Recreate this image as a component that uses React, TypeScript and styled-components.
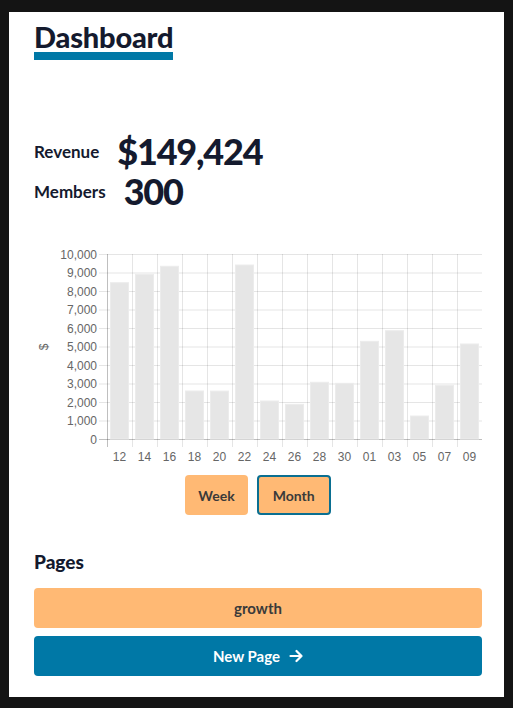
import React from "react";
import styled, { createGlobalStyle } from "styled-components";

const GlobalStyle = createGlobalStyle`
  html, body { margin: 0; padding: 0; }
  body {
    background: #141414;
    font-family: Lato, "Noto Sans", sans-serif;
    padding: 12px 9px 11px;
  }
`;

const Card = styled.main`
  background: #ffffff;
  padding: 10px 22px 21px 25px;
  display: flex;
  flex-direction: column;
`;

const Title = styled.h1`
  margin: 0;
  align-self: flex-start;
  font-size: 29px;
  line-height: 30px;
  font-weight: 900;
  color: #141a2e;
  letter-spacing: -0.2px;
  border-bottom: 8px solid #0078a6;
`;

const Stats = styled.section`
  margin-top: 71px;
  display: flex;
  flex-direction: column;
`;

const StatRow = styled.div`
  display: flex;
  align-items: center;
  gap: 18px;
  height: 40px;
`;

const StatLabel = styled.span`
  font-size: 17px;
  font-weight: 700;
  color: #141a2e;
`;

const StatValue = styled.span`
  font-size: 36px;
  font-weight: 900;
  color: #141a2e;
  letter-spacing: -1.2px;
`;

const ChartWrap = styled.div`
  margin-top: 29px;
  height: 228px;
`;

const ToggleRow = styled.div`
  display: flex;
  justify-content: center;
  gap: 9px;
  margin-top: 7px;
`;

const Toggle = styled.button<{ $active?: boolean }>`
  height: 40px;
  padding: 0 ${(p) => (p.$active ? "14px" : "13px")};
  background: #ffb974;
  border: ${(p) => (p.$active ? "2px solid #0a6f91" : "none")};
  border-radius: 4px;
  font-family: Lato, "Noto Sans", sans-serif;
  font-size: 14px;
  font-weight: 700;
  color: #3a3a3a;
`;

const PagesTitle = styled.h2`
  margin: 35px 0 0;
  font-size: 19px;
  line-height: 24px;
  font-weight: 900;
  color: #141a2e;
`;

const PageButton = styled.button<{ $primary?: boolean }>`
  margin-top: ${(p) => (p.$primary ? "8px" : "14px")};
  height: 40px;
  width: 100%;
  border: none;
  border-radius: 4px;
  background: ${(p) => (p.$primary ? "#0078a6" : "#ffb974")};
  color: ${(p) => (p.$primary ? "#ffffff" : "#3a3a3a")};
  font-family: Lato, "Noto Sans", sans-serif;
  font-size: 15px;
  font-weight: 700;
  display: flex;
  align-items: center;
  justify-content: center;
  gap: 9px;
`;

const labels = ["12", "14", "16", "18", "20", "22", "24", "26", "28", "30", "01", "03", "05", "07", "09"];
const values = [8450, 8900, 9335, 2595, 2590, 9405, 2054, 1875, 3065, 3010, 5280, 5855, 1243, 2900, 5135];

const Chart: React.FC = () => {
  const left = 73;
  const right = 448;
  const top = 14;
  const bottom = 199;
  const cat = (right - left) / labels.length;
  const yOf = (v: number) => bottom - ((bottom - top) * v) / 10000;
  const ticks = Array.from({ length: 11 }, (_, i) => i * 1000);
  return (
    <svg width="448" height="228" viewBox="0 0 448 228">
      {ticks.map((t) => (
        <g key={t}>
          <line
            x1={left - 8}
            x2={right}
            y1={yOf(t) + 0.5}
            y2={yOf(t) + 0.5}
            stroke={t === 0 ? "rgba(0,0,0,0.25)" : "rgba(0,0,0,0.1)"}
          />
          <text
            x={left - 10}
            y={yOf(t) + 4.5}
            textAnchor="end"
            fontFamily="'Liberation Sans', Arial, sans-serif"
            fontSize="12"
            fill="#666"
          >
            {t.toLocaleString("en-US")}
          </text>
        </g>
      ))}
      {Array.from({ length: labels.length + 1 }, (_, i) => (
        <line
          key={i}
          x1={left + i * cat + 0.5}
          x2={left + i * cat + 0.5}
          y1={top}
          y2={bottom + 8}
          stroke={i === 0 ? "rgba(0,0,0,0.25)" : "rgba(0,0,0,0.1)"}
        />
      ))}
      {values.map((v, i) => {
        const w = cat * 0.72;
        const x = left + i * cat + (cat - w) / 2;
        return (
          <rect
            key={i}
            x={x}
            y={yOf(v)}
            width={w}
            height={bottom - yOf(v)}
            fill="#e6e6e6"
            stroke="#ececec"
          />
        );
      })}
      {labels.map((l, i) => (
        <text
          key={l}
          x={left + i * cat + cat / 2}
          y={221}
          textAnchor="middle"
          fontFamily="'Liberation Sans', Arial, sans-serif"
          fontSize="12"
          fill="#666"
        >
          {l}
        </text>
      ))}
      <text
        x={0}
        y={0}
        transform="translate(14 107) rotate(-90)"
        textAnchor="middle"
        fontFamily="'Liberation Sans', Arial, sans-serif"
        fontSize="12"
        fill="#666"
      >
        $
      </text>
    </svg>
  );
};

const Arrow: React.FC = () => (
  <svg width="14" height="14" viewBox="0 0 14 14" fill="none" stroke="#fff" strokeWidth="2.2" strokeLinecap="round" strokeLinejoin="round">
    <path d="M1.5 7h11M7.5 2l5 5-5 5" />
  </svg>
);

export default function App() {
  return (
    <>
      <GlobalStyle />
      <Card>
        <Title>Dashboard</Title>
        <Stats>
          <StatRow>
            <StatLabel>Revenue</StatLabel>
            <StatValue>$149,424</StatValue>
          </StatRow>
          <StatRow>
            <StatLabel>Members</StatLabel>
            <StatValue>300</StatValue>
          </StatRow>
        </Stats>
        <ChartWrap>
          <Chart />
        </ChartWrap>
        <ToggleRow>
          <Toggle>Week</Toggle>
          <Toggle $active>Month</Toggle>
        </ToggleRow>
        <PagesTitle>Pages</PagesTitle>
        <PageButton>growth</PageButton>
        <PageButton $primary>
          New Page <Arrow />
        </PageButton>
      </Card>
    </>
  );
}
